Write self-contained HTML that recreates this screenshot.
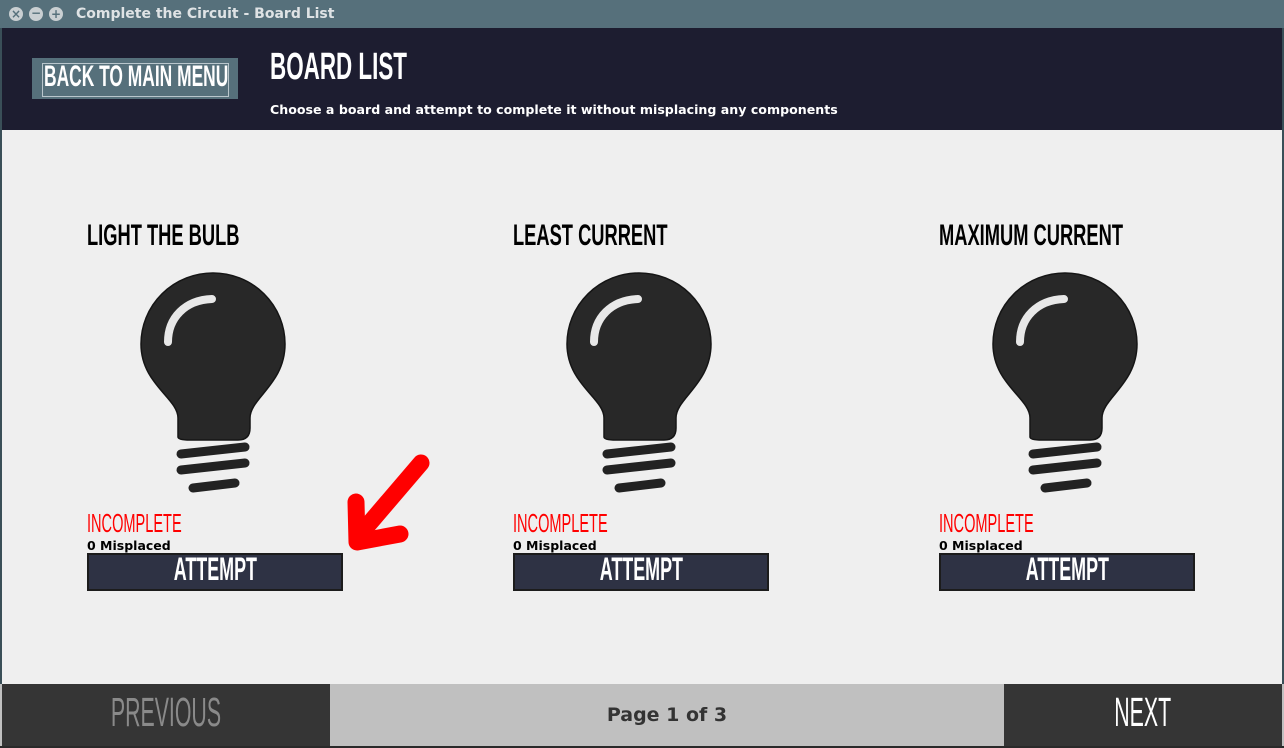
<!DOCTYPE html>
<html><head><meta charset="utf-8"><style>
*{margin:0;padding:0;box-sizing:border-box}
body{width:1284px;height:748px;overflow:hidden;background:#efefef;position:relative;font-family:"Liberation Sans",sans-serif}
.a{position:absolute}
.c{display:inline-block;white-space:nowrap;font-weight:bold;line-height:1;transform:scaleX(.56)}
.l{transform-origin:0 0}
.m{transform-origin:50% 0}
.cen{position:absolute;text-align:center}
</style></head><body>
<div class="a" style="left:0;top:0;width:1284px;height:28px;background:#56707b"></div>
<div class="a" style="left:9px;top:7px;width:14px;height:14px;border-radius:50%;background:#c9cfd2;color:#56707b;font:bold 12px/14px 'DejaVu Sans';text-align:center">×</div>
<div class="a" style="left:29px;top:7px;width:14px;height:14px;border-radius:50%;background:#c9cfd2;color:#56707b;font:bold 12px/13px 'DejaVu Sans';text-align:center">−</div>
<div class="a" style="left:49px;top:7px;width:14px;height:14px;border-radius:50%;background:#c9cfd2;color:#56707b;font:bold 12px/14px 'DejaVu Sans';text-align:center">+</div>
<div class="a" style="left:76px;top:6px;color:#dfe3e5;font:bold 14px/16px 'DejaVu Sans',sans-serif">Complete the Circuit - Board List</div>
<div class="a" style="left:0;top:28px;width:1284px;height:102px;background:#1d1d30"></div>
<div class="a" style="left:0;top:28px;width:2px;height:720px;background:#3a4f58"></div>
<div class="a" style="left:1282px;top:28px;width:2px;height:720px;background:#3a4f58"></div>
<div class="a" style="left:32px;top:58px;width:206px;height:41px;background:#56707b"></div>
<div class="a" style="left:42px;top:63px;width:187px;height:34px;border:1px solid #b9c6cc"></div>
<div class="a" style="left:44px;top:62px"><span class="c l" style="font-size:30px;color:#fff;transform:scaleX(.58)">BACK TO MAIN MENU</span></div>
<div class="a" style="left:270px;top:48px"><span class="c l" style="font-size:38px;color:#fff;transform:scaleX(.59)">BOARD LIST</span></div>
<div class="a" style="left:270px;top:102px;color:#fff;font:bold 12.6px/16px 'DejaVu Sans',sans-serif">Choose a board and attempt to complete it without misplacing any components</div>

<svg class="a" style="left:0;top:0" width="1284" height="748">
<defs>
<g id="bulb">
<path d="M178 437 L178 418 C178 398 141 384 141 344 A72 71 0 1 1 285 344 C285 384 250 398 250 418 L250 428 Q250 440 238 440 L190 440 Q178 440 178 437 Z" fill="#282828" stroke="#151515" stroke-width="1.5"/>
<path d="M168 342 C168 318 185 300 212 299" fill="none" stroke="#e8e8e8" stroke-width="8" stroke-linecap="round"/>
<g stroke="#222" stroke-width="9" stroke-linecap="round">
<line x1="181" y1="454" x2="245" y2="447"/>
<line x1="181" y1="470" x2="245" y2="463"/>
<line x1="193" y1="488" x2="235" y2="483"/>
</g>
</g>
</defs>
<use href="#bulb"/>
<use href="#bulb" x="426"/>
<use href="#bulb" x="852"/>
<g stroke="#ff0000" stroke-width="17" stroke-linecap="round" stroke-linejoin="round" fill="none">
<line x1="421" y1="463" x2="368" y2="525"/>
<polyline points="356,502 357,542 400,534"/>
</g>
</svg>

<div class="a" style="left:87px;top:221px"><span class="c l" style="font-size:30px;color:#000;transform:scaleX(.61)">LIGHT THE BULB</span></div>
<div class="a" style="left:513px;top:221px"><span class="c l" style="font-size:30px;color:#000;transform:scaleX(.61)">LEAST CURRENT</span></div>
<div class="a" style="left:939px;top:221px"><span class="c l" style="font-size:30px;color:#000;transform:scaleX(.61)">MAXIMUM CURRENT</span></div>

<div class="a" style="left:87px;top:510px"><span class="c l" style="font-size:26px;font-weight:normal;color:#f00;transform:scaleX(.56)">INCOMPLETE</span></div>
<div class="a" style="left:513px;top:510px"><span class="c l" style="font-size:26px;font-weight:normal;color:#f00;transform:scaleX(.56)">INCOMPLETE</span></div>
<div class="a" style="left:939px;top:510px"><span class="c l" style="font-size:26px;font-weight:normal;color:#f00;transform:scaleX(.56)">INCOMPLETE</span></div>
<div class="a" style="left:87px;top:538px;font:bold 12.5px/15px 'DejaVu Sans',sans-serif">0 Misplaced</div>
<div class="a" style="left:513px;top:538px;font:bold 12.5px/15px 'DejaVu Sans',sans-serif">0 Misplaced</div>
<div class="a" style="left:939px;top:538px;font:bold 12.5px/15px 'DejaVu Sans',sans-serif">0 Misplaced</div>

<div class="cen" style="left:87px;top:553px;width:256px;height:38px;background:#2e3244;border:2px solid #1c1c1c;padding-top:0"><span class="c m" style="font-size:32px;color:#fff;transform:scaleX(.56) translateY(-2px)">ATTEMPT</span></div>
<div class="cen" style="left:513px;top:553px;width:256px;height:38px;background:#2e3244;border:2px solid #1c1c1c;padding-top:0"><span class="c m" style="font-size:32px;color:#fff;transform:scaleX(.56) translateY(-2px)">ATTEMPT</span></div>
<div class="cen" style="left:939px;top:553px;width:256px;height:38px;background:#2e3244;border:2px solid #1c1c1c;padding-top:0"><span class="c m" style="font-size:32px;color:#fff;transform:scaleX(.56) translateY(-2px)">ATTEMPT</span></div>

<div class="a" style="left:0;top:684px;width:1284px;height:64px;background:#c0c0c0"></div>
<div class="cen" style="left:2px;top:684px;width:328px;height:62px;background:#353535;padding-top:8px"><span class="c m" style="font-size:41px;font-weight:normal;color:#8a8a8a;transform:scaleX(.52)">PREVIOUS</span></div>
<div class="cen" style="left:1004px;top:684px;width:278px;height:62px;background:#353535;padding-top:8px"><span class="c m" style="font-size:41px;font-weight:normal;color:#fff;transform:scaleX(.52)">NEXT</span></div>
<div class="cen" style="left:330px;top:704px;width:674px;font:bold 19px/22px 'DejaVu Sans',sans-serif;color:#333">Page 1 of 3</div>
<div class="a" style="left:0;top:746px;width:1284px;height:2px;background:#2a2a2a"></div>
</body></html>
